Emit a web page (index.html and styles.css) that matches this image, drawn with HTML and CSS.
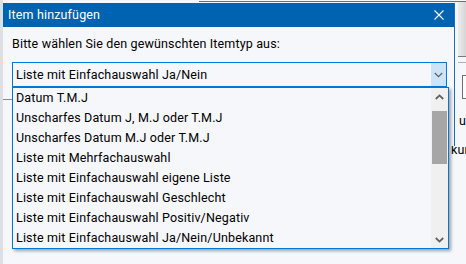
FILE: index.html
```html
<!DOCTYPE html>
<html lang="de">
<head>
  <meta charset="UTF-8">
  <meta name="viewport" content="width=device-width, initial-scale=1.0">
  <title>Item hinzufügen</title>
  <link rel="stylesheet" href="styles.css">
</head>
<body>
  <div class="desktop">
    <!-- main window behind the dialog -->
    <div class="backdrop">
      <div class="bg-topline"></div>
      <div class="bg-side"></div>
      <div class="bg-rule bg-rule-a"></div>
      <div class="bg-rule bg-rule-b"></div>
      <div class="bg-box"></div>
      <span class="bg-text bg-text-a">ur</span>
      <span class="bg-text bg-text-b">kum</span>
    </div>

    <div class="dialog">
      <div class="titlebar">
        <span class="title">Item hinzufügen</span>
        <svg class="close" width="10" height="10" viewBox="0 0 10 10">
          <path d="M0.5 0.5 L9.5 9.5 M9.5 0.5 L0.5 9.5" stroke="#fff" stroke-width="1.1" fill="none"/>
        </svg>
      </div>
      <div class="dialog-body">
        <p class="prompt">Bitte wählen Sie den gewünschten Itemtyp aus:</p>
        <div class="combo">
          <span class="combo-value">Liste mit Einfachauswahl Ja/Nein</span>
          <span class="combo-btn">
            <svg width="9" height="6" viewBox="0 0 9 6">
              <path d="M0.8 1 L4.5 4.6 L8.2 1" stroke="#606060" stroke-width="1.2" fill="none"/>
            </svg>
          </span>
        </div>
        <div class="group"></div>
      </div>
    </div>

    <!-- open dropdown list -->
    <div class="dropdown">
      <ul class="options">
        <li>Datum T.M.J</li>
        <li>Unscharfes Datum J, M.J oder T.M.J</li>
        <li>Unscharfes Datum M.J oder T.M.J</li>
        <li>Liste mit Mehrfachauswahl</li>
        <li>Liste mit Einfachauswahl eigene Liste</li>
        <li>Liste mit Einfachauswahl Geschlecht</li>
        <li>Liste mit Einfachauswahl Positiv/Negativ</li>
        <li>Liste mit Einfachauswahl Ja/Nein/Unbekannt</li>
      </ul>
      <div class="scrollbar">
        <span class="arrow">
          <svg width="9" height="6" viewBox="0 0 9 6">
            <path d="M0.8 5 L4.5 1.4 L8.2 5" stroke="#606060" stroke-width="1.8" fill="none"/>
          </svg>
        </span>
        <div class="track">
          <div class="thumb"></div>
        </div>
        <span class="arrow">
          <svg width="9" height="6" viewBox="0 0 9 6">
            <path d="M0.8 1 L4.5 4.6 L8.2 1" stroke="#606060" stroke-width="1.8" fill="none"/>
          </svg>
        </span>
      </div>
    </div>
  </div>
</body>
</html>
```

FILE: styles.css
```css
* {
  box-sizing: border-box;
}
body {
  margin: 0;
  font-family: Roboto, "Noto Sans", sans-serif;
  font-size: 12.5px;
  letter-spacing: 0.15px;
  color: #000;
  background: #f6f7fb;
}
.desktop {
  position: relative;
  width: 466px;
  height: 264px;
  overflow: hidden;
  background: #f6f7fb;
}

/* background window fragments */
.backdrop {
  position: absolute;
  inset: 0;
  border-left: 3px solid #dedfe6;
}
.bg-topline {
  position: absolute;
  left: 196px;
  right: 0;
  top: 1px;
  height: 1px;
  background: #6e6e6e;
}
.bg-side {
  position: absolute;
  left: 455px;
  right: 0;
  top: 2px;
  height: 54px;
  background: linear-gradient(to right, #ececec, #d6d6d6);
}
.bg-rule {
  position: absolute;
  left: 455px;
  right: 0;
  height: 1px;
  background: #7a7a7a;
}
.bg-rule-a { top: 56px; }
.bg-rule-b { top: 62px; background: #b0b0b0; }
.bg-box {
  position: absolute;
  left: 459px;
  top: 75px;
  width: 20px;
  height: 24px;
  border: 1px solid #6e6e6e;
  background: #fbfbfb;
}
.bg-text {
  position: absolute;
  line-height: 14px;
}
.bg-text-a { left: 456px; top: 114px; }
.bg-text-b { left: 448px; top: 143px; }

/* dialog */
.dialog {
  position: absolute;
  left: 3px;
  top: 3px;
  width: 452px;
  height: 143px;
  background: #f6f7fb;
  border-right: 1px solid #1b6cc0;
  display: flex;
  flex-direction: column;
}
.titlebar {
  height: 24px;
  background: #0063b1;
  color: #fff;
  display: flex;
  align-items: center;
  justify-content: space-between;
  padding: 0 10px 0 5px;
}
.title {
  line-height: 16px;
}
.dialog-body {
  padding: 9px 7px 0 9px;
}
.prompt {
  margin: 0;
  line-height: 16px;
}
.combo {
  margin-top: 10px;
  height: 25px;
  border: 1px solid #0078d7;
  display: flex;
  align-items: stretch;
  background: #f6f7fb;
}
.combo-value {
  flex: 1;
  padding-left: 3px;
  line-height: 23px;
}
.combo-btn {
  width: 15px;
  background: #cce4f7;
  display: flex;
  align-items: center;
  justify-content: center;
}
.group {
  margin: 12px 0 0 -9px;
  border-top: 1px solid #8a8a8a;
}

/* dropdown popup */
.dropdown {
  position: absolute;
  left: 12px;
  top: 87px;
  width: 437px;
  height: 162px;
  border: 1px solid #0078d7;
  background: #f6f7fb;
  box-shadow: 2px 2px 3px rgba(0, 0, 0, 0.35);
  display: flex;
}
.options {
  flex: 1;
  margin: 0;
  padding: 0;
  list-style: none;
}
.options li {
  height: 20px;
  line-height: 20px;
  padding-left: 3px;
  white-space: nowrap;
}
.scrollbar {
  width: 17px;
  background: #f0f0f0;
  display: flex;
  flex-direction: column;
}
.arrow {
  height: 17px;
  display: flex;
  align-items: center;
  justify-content: center;
}
.track {
  flex: 1;
  padding: 6px 1px 0;
}
.thumb {
  height: 53px;
  background: #a6a6a6;
}
```
